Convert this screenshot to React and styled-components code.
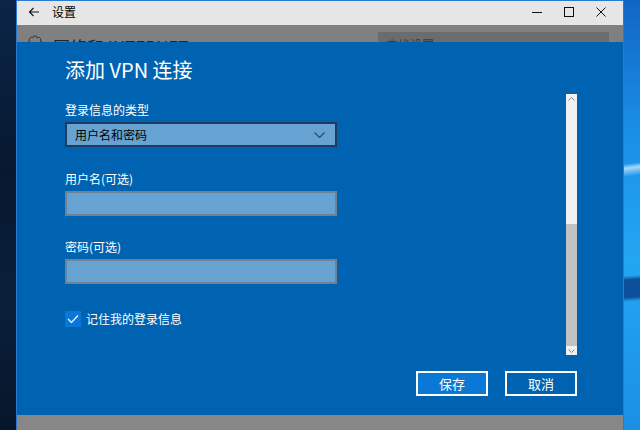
import React from 'react'
import styled, { createGlobalStyle } from 'styled-components'

const GlobalStyle = createGlobalStyle`
  html, body {
    margin: 0;
    padding: 0;
    background: #0a1d38;
  }
  body {
    font-family: "Noto Sans CJK SC", "Noto Sans", sans-serif;
  }
`

const Screen = styled.div`
  width: 640px;
  height: 430px;
  display: flex;
  overflow: hidden;
`

const DesktopLeft = styled.div`
  width: 16px;
  background: linear-gradient(180deg, #0b2548 0%, #07182f 40%, #0b1f3b 70%, #06162a 100%);
`

const DesktopRight = styled.div`
  flex: 1;
  background:
    linear-gradient(172deg, transparent 0 38%, rgba(190, 230, 255, 0.85) 39%, transparent 41%),
    linear-gradient(176deg, transparent 0 64%, #0c4f9a 65% 69%, transparent 70%),
    linear-gradient(180deg, #1166c4 0%, #1a8ee6 30%, #23a6f2 60%, #1b8fe4 100%);
`

const Window = styled.div`
  width: 608px;
  display: flex;
  flex-direction: column;
  border-left: 1px solid #2a7bd0;
  border-right: 1px solid #2a7bd0;
  box-sizing: border-box;
`

const TitleBar = styled.div`
  height: 25px;
  box-sizing: border-box;
  border-top: 1px solid #2a7bd0;
  background: #e6e6e6;
  display: flex;
  align-items: center;
  font-size: 12px;
  line-height: 14px;
  color: #000;
  padding-bottom: 2px;
`

const BackButton = styled.div`
  width: 34px;
  display: flex;
  justify-content: center;
`

const TitleText = styled.div`
  flex: 1;
  padding-left: 1px;
`

const CaptionButton = styled.div`
  width: 32px;
  display: flex;
  justify-content: center;
  align-items: center;
`

const Dimmed = styled.div`
  height: ${p => p.h}px;
  background: ${p => p.bg || '#808080'};
  overflow: hidden;
  display: flex;
  align-items: flex-start;
`

const DimHeader = styled.div`
  display: flex;
  width: 100%;
  padding-top: 7px;
  align-items: flex-start;
`

const DimGear = styled.div`
  width: 36px;
  display: flex;
  justify-content: center;
  padding-top: 3px;
`

const DimTitle = styled.div`
  flex: 1;
  font-size: 17px;
  line-height: 20px;
  color: #262626;
  padding-top: 5px;
`

const DimSearch = styled.div`
  width: 231px;
  height: 26px;
  margin-right: 14px;
  background: #6c6c6c;
  color: #3a3a3a;
  font-size: 12px;
  line-height: 14px;
  box-sizing: border-box;
  padding: 6px 8px;
`

const Dialog = styled.div`
  height: 373px;
  background: #0063b1;
  display: flex;
  color: #fff;
`

const Content = styled.div`
  flex: 1;
  padding: 14px 0 0 48px;
  display: flex;
  flex-direction: column;
`

const Heading = styled.div`
  font-size: 20px;
  line-height: 28px;
  margin-bottom: 18px;
`

const Label = styled.div`
  font-size: 12px;
  line-height: 16px;
  margin-bottom: 4px;
`

const Field = styled.div`
  width: 272px;
  height: 25px;
  box-sizing: border-box;
  background: #66a3d3;
  border: 2px solid ${p => (p.focus ? '#1e3a5c' : '#6f8294')};
  display: flex;
  align-items: center;
  justify-content: space-between;
  padding: 0 10px 0 8px;
  font-size: 12px;
  color: #000;
  margin-bottom: ${p => p.gap}px;
`

const CheckRow = styled.div`
  display: flex;
  align-items: center;
  gap: 5px;
  font-size: 12px;
  margin-top: 2px;
`

const CheckBox = styled.div`
  width: 16px;
  height: 16px;
  background: #0a78d7;
  display: flex;
  align-items: center;
  justify-content: center;
`

const ButtonRow = styled.div`
  display: flex;
  justify-content: flex-end;
  gap: 17px;
  margin-top: auto;
  margin-bottom: 19px;
  margin-right: -11px;
`

const Button = styled.div`
  width: 72px;
  height: 25px;
  box-sizing: border-box;
  border: 2px solid #fff;
  background: ${p => (p.primary ? '#0a78d7' : 'transparent')};
  display: flex;
  align-items: center;
  justify-content: center;
  font-size: 13px;
`

const ScrollCol = styled.div`
  width: 11px;
  margin: 52px 46px 0 0;
  height: 261px;
  display: flex;
  flex-direction: column;
  background: #f0f0f0;
`

const ScrollArrow = styled.div`
  height: 9px;
  display: flex;
  justify-content: center;
  align-items: center;
`

const ScrollTrack = styled.div`
  flex: 1;
  display: flex;
  flex-direction: column;
`

const ScrollThumb = styled.div`
  margin-top: auto;
  height: 122px;
  background: #c2c2c2;
`

const Arrow = ({ up }) => (
  <svg width="7" height="4" viewBox="0 0 7 4">
    <path d={up ? 'M0.5 3.5 L3.5 0.5 L6.5 3.5' : 'M0.5 0.5 L3.5 3.5 L6.5 0.5'} stroke="#8a8a8a" fill="none" strokeWidth="1" />
  </svg>
)

const App = () => (
  <>
    <GlobalStyle />
    <Screen>
      <DesktopLeft />
      <Window>
        <TitleBar>
          <BackButton>
            <svg width="12" height="10" viewBox="0 0 12 10">
              <path d="M11 5 H1.5 M5.5 1 L1.5 5 L5.5 9" stroke="#111" strokeWidth="1.1" fill="none" />
            </svg>
          </BackButton>
          <TitleText>设置</TitleText>
          <CaptionButton>
            <svg width="10" height="10" viewBox="0 0 10 10">
              <path d="M0 5.5 H10" stroke="#111" strokeWidth="1" />
            </svg>
          </CaptionButton>
          <CaptionButton>
            <svg width="10" height="10" viewBox="0 0 10 10">
              <rect x="0.5" y="0.5" width="9" height="9" stroke="#111" fill="none" strokeWidth="1" />
            </svg>
          </CaptionButton>
          <CaptionButton style={{ marginRight: 6 }}>
            <svg width="10" height="10" viewBox="0 0 10 10">
              <path d="M0.5 0.5 L9.5 9.5 M9.5 0.5 L0.5 9.5" stroke="#111" strokeWidth="1" />
            </svg>
          </CaptionButton>
        </TitleBar>
        <Dimmed h={17}>
          <DimHeader>
            <DimGear>
              <svg width="16" height="16" viewBox="0 0 16 16">
                <path d="M6.5 1 H9.5 L10 3 L12 2 L14 4 L13 6 L15 6.5 V9.5 L13 10 L14 12 L12 14 L10 13 L9.5 15 H6.5 L6 13 L4 14 L2 12 L3 10 L1 9.5 V6.5 L3 6 L2 4 L4 2 L6 3 Z" stroke="#3d3d3d" fill="none" strokeWidth="1" />
              </svg>
            </DimGear>
            <DimTitle>网络和 INTERNET</DimTitle>
            <DimSearch>查找设置</DimSearch>
          </DimHeader>
        </Dimmed>
        <Dialog>
          <Content>
            <Heading>添加 VPN 连接</Heading>
            <Label>登录信息的类型</Label>
            <Field focus gap={24}>
              <span>用户名和密码</span>
              <svg width="11" height="6" viewBox="0 0 11 6">
                <path d="M0.5 0.5 L5.5 5.5 L10.5 0.5" stroke="#2d4a6a" fill="none" strokeWidth="1.2" />
              </svg>
            </Field>
            <Label>用户名(可选)</Label>
            <Field gap={23} />
            <Label>密码(可选)</Label>
            <Field gap={24} />
            <CheckRow>
              <CheckBox>
                <svg width="12" height="10" viewBox="0 0 12 10">
                  <path d="M1 5 L4.5 8.5 L11 1.5" stroke="#fff" fill="none" strokeWidth="1.2" />
                </svg>
              </CheckBox>
              记住我的登录信息
            </CheckRow>
            <ButtonRow>
              <Button primary>保存</Button>
              <Button>取消</Button>
            </ButtonRow>
          </Content>
          <ScrollCol>
            <ScrollArrow><Arrow up /></ScrollArrow>
            <ScrollTrack>
              <ScrollThumb />
            </ScrollTrack>
            <ScrollArrow><Arrow /></ScrollArrow>
          </ScrollCol>
        </Dialog>
        <Dimmed h={15} bg="#878787" />
      </Window>
      <DesktopRight />
    </Screen>
  </>
)

export default App
